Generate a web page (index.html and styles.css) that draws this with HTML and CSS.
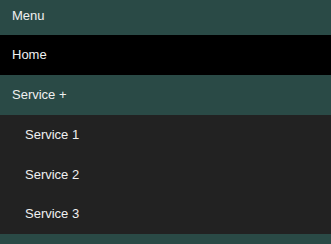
FILE: index.html
```html
<!DOCTYPE html>
<html>
<head>
<meta charset="utf-8">
<link rel="stylesheet" href="styles.css">
</head>
<body>
<nav class="nav">
  <div class="menu-title">Menu</div>
  <ul class="menu">
    <li class="item active"><a href="#">Home</a></li>
    <li class="item"><a href="#">Service +</a>
      <ul class="submenu">
        <li class="subitem"><a href="#">Service 1</a></li>
        <li class="subitem"><a href="#">Service 2</a></li>
        <li class="subitem"><a href="#">Service 3</a></li>
      </ul>
    </li>
  </ul>
</nav>
</body>
</html>
```
FILE: styles.css
```css
html, body {
  margin: 0;
  padding: 0;
  background: #2a4a46;
  font-family: "Liberation Sans", Arial, sans-serif;
  font-size: 13px;
}
.nav {
  background: #2a4a46;
}
.menu-title {
  height: 35px;
  line-height: 32px;
  padding-left: 12px;
  color: #f0f0f0;
}
.menu, .submenu {
  list-style: none;
  margin: 0;
  padding: 0;
}
.item > a {
  display: block;
  height: 40px;
  line-height: 40px;
  padding-left: 12px;
  color: #f0f0f0;
  text-decoration: none;
}
.item.active > a {
  background: #000000;
}
.submenu {
  background: #222222;
}
.subitem > a {
  display: block;
  height: 39.67px;
  line-height: 39px;
  padding-left: 25px;
  color: #f0f0f0;
  text-decoration: none;
}
```
